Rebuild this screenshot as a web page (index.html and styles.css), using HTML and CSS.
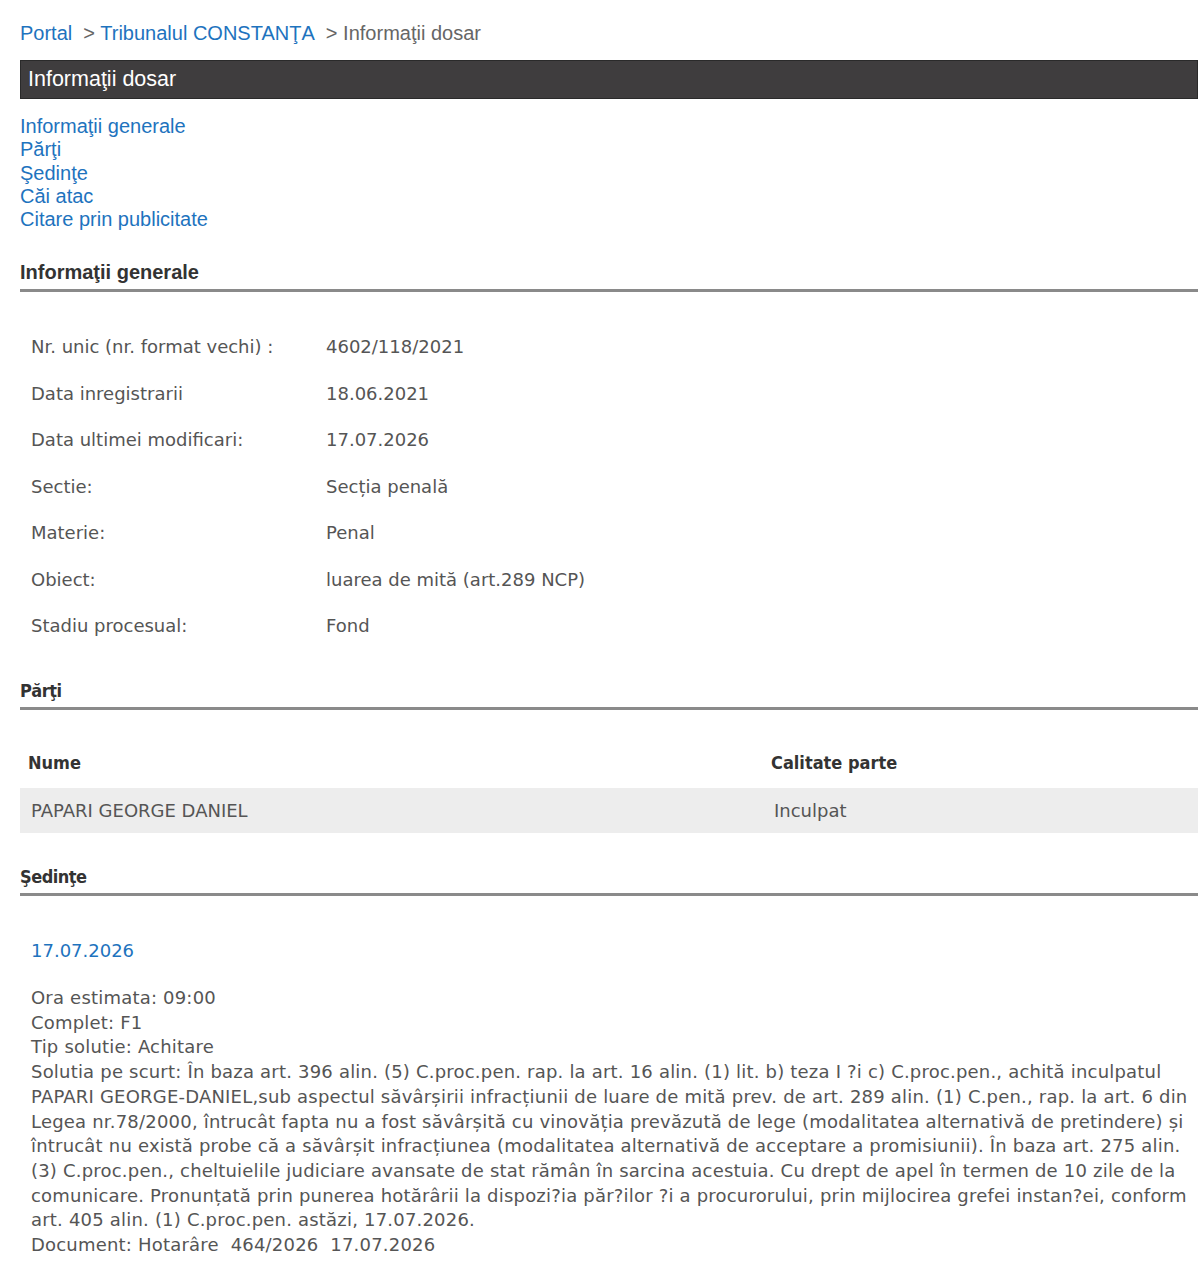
FILE: index.html
```html
<!DOCTYPE html>
<html lang="ro">
<head>
  <meta charset="UTF-8" />
  <title>Informaţii dosar</title>
  <meta name="viewport" content="width=device-width, initial-scale=1.0" />
  <link rel="stylesheet" href="styles.css">
</head>
<body>

  <div class="breadcrumb">
    <a href="#">Portal</a>&nbsp; &gt; <a href="#">Tribunalul CONSTANŢA</a>&nbsp; &gt; <span>Informaţii dosar</span>
  </div>

  <div class="title-bar">Informaţii dosar</div>

  <ul class="toc">
    <li><a href="#generale">Informaţii generale</a></li>
    <li><a href="#parti">Părţi</a></li>
    <li><a href="#sedinte">Şedinţe</a></li>
    <li><a href="#cai">Căi atac</a></li>
    <li><a href="#citare">Citare prin publicitate</a></li>
  </ul>

  <h3 id="generale" class="section-title">Informaţii generale</h3>
  <table class="info-table">
    <tr><td class="label">Nr. unic (nr. format vechi) :</td><td>4602/118/2021</td></tr>
    <tr><td class="label">Data inregistrarii</td><td>18.06.2021</td></tr>
    <tr><td class="label">Data ultimei modificari:</td><td>17.07.2026</td></tr>
    <tr><td class="label">Sectie:</td><td>Secția penală</td></tr>
    <tr><td class="label">Materie:</td><td>Penal</td></tr>
    <tr><td class="label">Obiect:</td><td>luarea de mită (art.289 NCP)</td></tr>
    <tr><td class="label">Stadiu procesual:</td><td>Fond</td></tr>
  </table>

  <h3 id="parti" class="section-title narrow">Părţi</h3>
  <table class="parti-table">
    <thead>
      <tr><th class="col-name">Nume</th><th>Calitate parte</th></tr>
    </thead>
    <tbody>
      <tr class="alt"><td>PAPARI GEORGE DANIEL</td><td>Inculpat</td></tr>
    </tbody>
  </table>

  <h3 id="sedinte" class="section-title narrow">Şedinţe</h3>
  <div class="sedinta">
    <a href="#" class="sedinta-date">17.07.2026</a>
    <p class="sedinta-body">
      Ora estimata: 09:00<br>
      Complet: F1<br>
      Tip solutie: Achitare<br>
      Solutia pe scurt: În baza art. 396 alin. (5) C.proc.pen. rap. la art. 16 alin. (1) lit. b) teza I ?i c) C.proc.pen., achită inculpatul<br>
      PAPARI GEORGE-DANIEL,sub aspectul săvârșirii infracțiunii de luare de mită prev. de art. 289 alin. (1) C.pen., rap. la art. 6 din<br>
      Legea nr.78/2000, întrucât fapta nu a fost săvârșită cu vinovăția prevăzută de lege (modalitatea alternativă de pretindere) și<br>
      întrucât nu există probe că a săvârșit infracțiunea (modalitatea alternativă de acceptare a promisiunii). În baza art. 275 alin.<br>
      (3) C.proc.pen., cheltuielile judiciare avansate de stat rămân în sarcina acestuia. Cu drept de apel în termen de 10 zile de la<br>
      comunicare. Pronunțată prin punerea hotărârii la dispozi?ia păr?ilor ?i a procurorului, prin mijlocirea grefei instan?ei, conform<br>
      art. 405 alin. (1) C.proc.pen. astăzi, 17.07.2026.<br>
      Document: Hotarâre&nbsp; 464/2026&nbsp; 17.07.2026
    </p>
  </div>

</body>
</html>
```

FILE: styles.css
```css
body {
  margin: 0;
  padding: 0 2px 0 20px;
  background: #fff;
  font-family: "Liberation Sans", Arial, sans-serif;
  color: #555;
}

a {
  color: #1e73be;
  text-decoration: none;
}

.breadcrumb {
  font-size: 20px;
  line-height: 24px;
  padding-top: 21px;
  color: #666;
}

.title-bar {
  margin-top: 15px;
  height: 37px;
  line-height: 37px;
  padding-left: 7px;
  background: #3f3d3e;
  border: 1px solid #2a2a2a;
  color: #fff;
  font-size: 21.5px;
}

.toc {
  list-style: none;
  margin: 16px 0 0;
  padding: 0;
  font-size: 20px;
  line-height: 23.3px;
}

.section-title {
  margin: 29px 0 0;
  padding-bottom: 5px;
  border-bottom: 3px solid #8a8a8a;
  font-size: 20px;
  line-height: 24px;
  color: #333;
  font-weight: bold;
}

.section-title.narrow {
  margin-top: 30px;
  padding-bottom: 4px;
  font-family: "DejaVu Sans Condensed", "DejaVu Sans", sans-serif;
  font-size: 18px;
  letter-spacing: -0.5px;
}

.info-table,
.parti-table {
  width: 100%;
  border-collapse: collapse;
  font-family: "DejaVu Sans", sans-serif;
  font-size: 18px;
  color: #555;
}

.info-table {
  margin: 31px 0 22px;
}

.info-table td {
  height: 46.5px;
  padding: 0 0 0 11px;
  vertical-align: middle;
}

.info-table .label {
  width: 284px;
}

.parti-table {
  margin: 28px 0 32px;
}

.parti-table th {
  text-align: left;
  font-family: "DejaVu Sans Condensed", "DejaVu Sans", sans-serif;
  font-weight: bold;
  color: #333;
  height: 50px;
  padding: 0 0 0 8px;
}

.parti-table .col-name {
  width: 735px;
}

.parti-table td {
  height: 45px;
  padding: 0 0 0 11px;
}

.parti-table .alt {
  background: #ededed;
}

.sedinta {
  padding: 0 0 0 11px;
  font-family: "DejaVu Sans", sans-serif;
  font-size: 18px;
}

.sedinta-date {
  display: block;
  margin-top: 43px;
  line-height: 24px;
}

.sedinta-body {
  margin: 23px 0 0;
  line-height: 24.7px;
  letter-spacing: 0.2px;
  color: #555;
}
```
